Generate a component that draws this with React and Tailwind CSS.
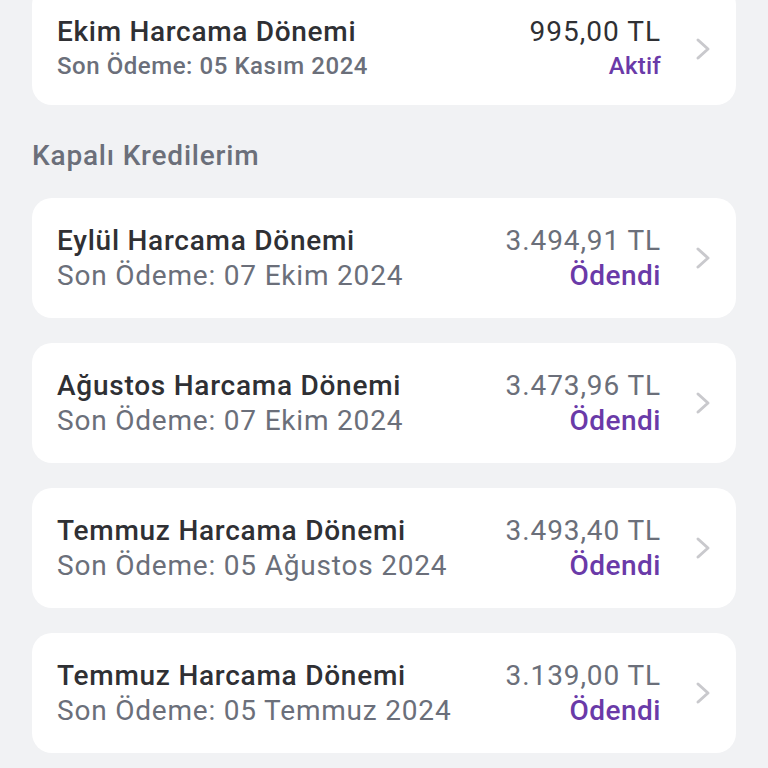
import { ChevronRight } from 'lucide-react';

// Closed credit periods shown in the list
const CLOSED = [
  { title: 'Eylül Harcama Dönemi', due: 'Son Ödeme: 07 Ekim 2024', amount: '3.494,91 TL' },
  { title: 'Ağustos Harcama Dönemi', due: 'Son Ödeme: 07 Ekim 2024', amount: '3.473,96 TL' },
  { title: 'Temmuz Harcama Dönemi', due: 'Son Ödeme: 05 Ağustos 2024', amount: '3.493,40 TL' },
  { title: 'Temmuz Harcama Dönemi', due: 'Son Ödeme: 05 Temmuz 2024', amount: '3.139,00 TL' },
];

function Chevron() {
  return (
    <svg width="18" height="24" viewBox="0 0 18 24" className="ml-[33px] shrink-0" fill="none">
      <polyline points="4,3 14,12 4,21" stroke="#c9c9cd" strokeWidth="3" strokeLinecap="round" strokeLinejoin="round" />
    </svg>
  );
}

function ClosedCard({ item }) {
  return (
    <div className="h-[120px] rounded-[20px] bg-white flex items-center pl-[25px] pr-[24px]">
      <div className="flex-1 leading-[35px]">
        <div className="text-[28px] font-medium tracking-[0.75px] text-[#2f3034]">{item.title}</div>
        <div className="text-[28px] tracking-[0.8px] text-[#6b6f7a]">{item.due}</div>
      </div>
      <div className="text-right leading-[35px]">
        <div className="text-[28px] tracking-[0.9px] text-[#6b6f7a]">{item.amount}</div>
        <div className="text-[28px] font-medium tracking-[0.5px] text-[#6a3aa8]">Ödendi</div>
      </div>
      <Chevron />
    </div>
  );
}

export default function App() {
  return (
    <div
      className="min-h-[768px] bg-[#f1f2f4] px-8 overflow-hidden"
      style={{ fontFamily: 'Roboto, "Noto Sans", sans-serif' }}
    >
      <div className="-mt-[15px] h-[120px] rounded-[20px] bg-white flex items-center pl-[25px] pr-[24px] pt-[8px]">
        <div className="flex-1 leading-[34px]">
          <div className="text-[28px] font-medium tracking-[0.7px] text-[#2f3034]">Ekim Harcama Dönemi</div>
          <div className="text-[24px] font-medium tracking-[0.55px] text-[#6b6f7a]">Son Ödeme: 05 Kasım 2024</div>
        </div>
        <div className="text-right leading-[34px]">
          <div className="text-[28px] tracking-[1px] text-[#2f3034]">995,00 TL</div>
          <div className="text-[24px] font-medium tracking-[0.25px] text-[#6a3aa8]">Aktif</div>
        </div>
        <Chevron />
      </div>

      <h2 className="mt-[33px] mb-[24px] text-[28px] leading-[36px] font-medium tracking-[0.8px] text-[#6b6f7a]">
        Kapalı Kredilerim
      </h2>

      <div className="flex flex-col gap-[25px] pb-6">
        {CLOSED.map((item, i) => (
          <ClosedCard key={i} item={item} />
        ))}
      </div>
    </div>
  );
}
